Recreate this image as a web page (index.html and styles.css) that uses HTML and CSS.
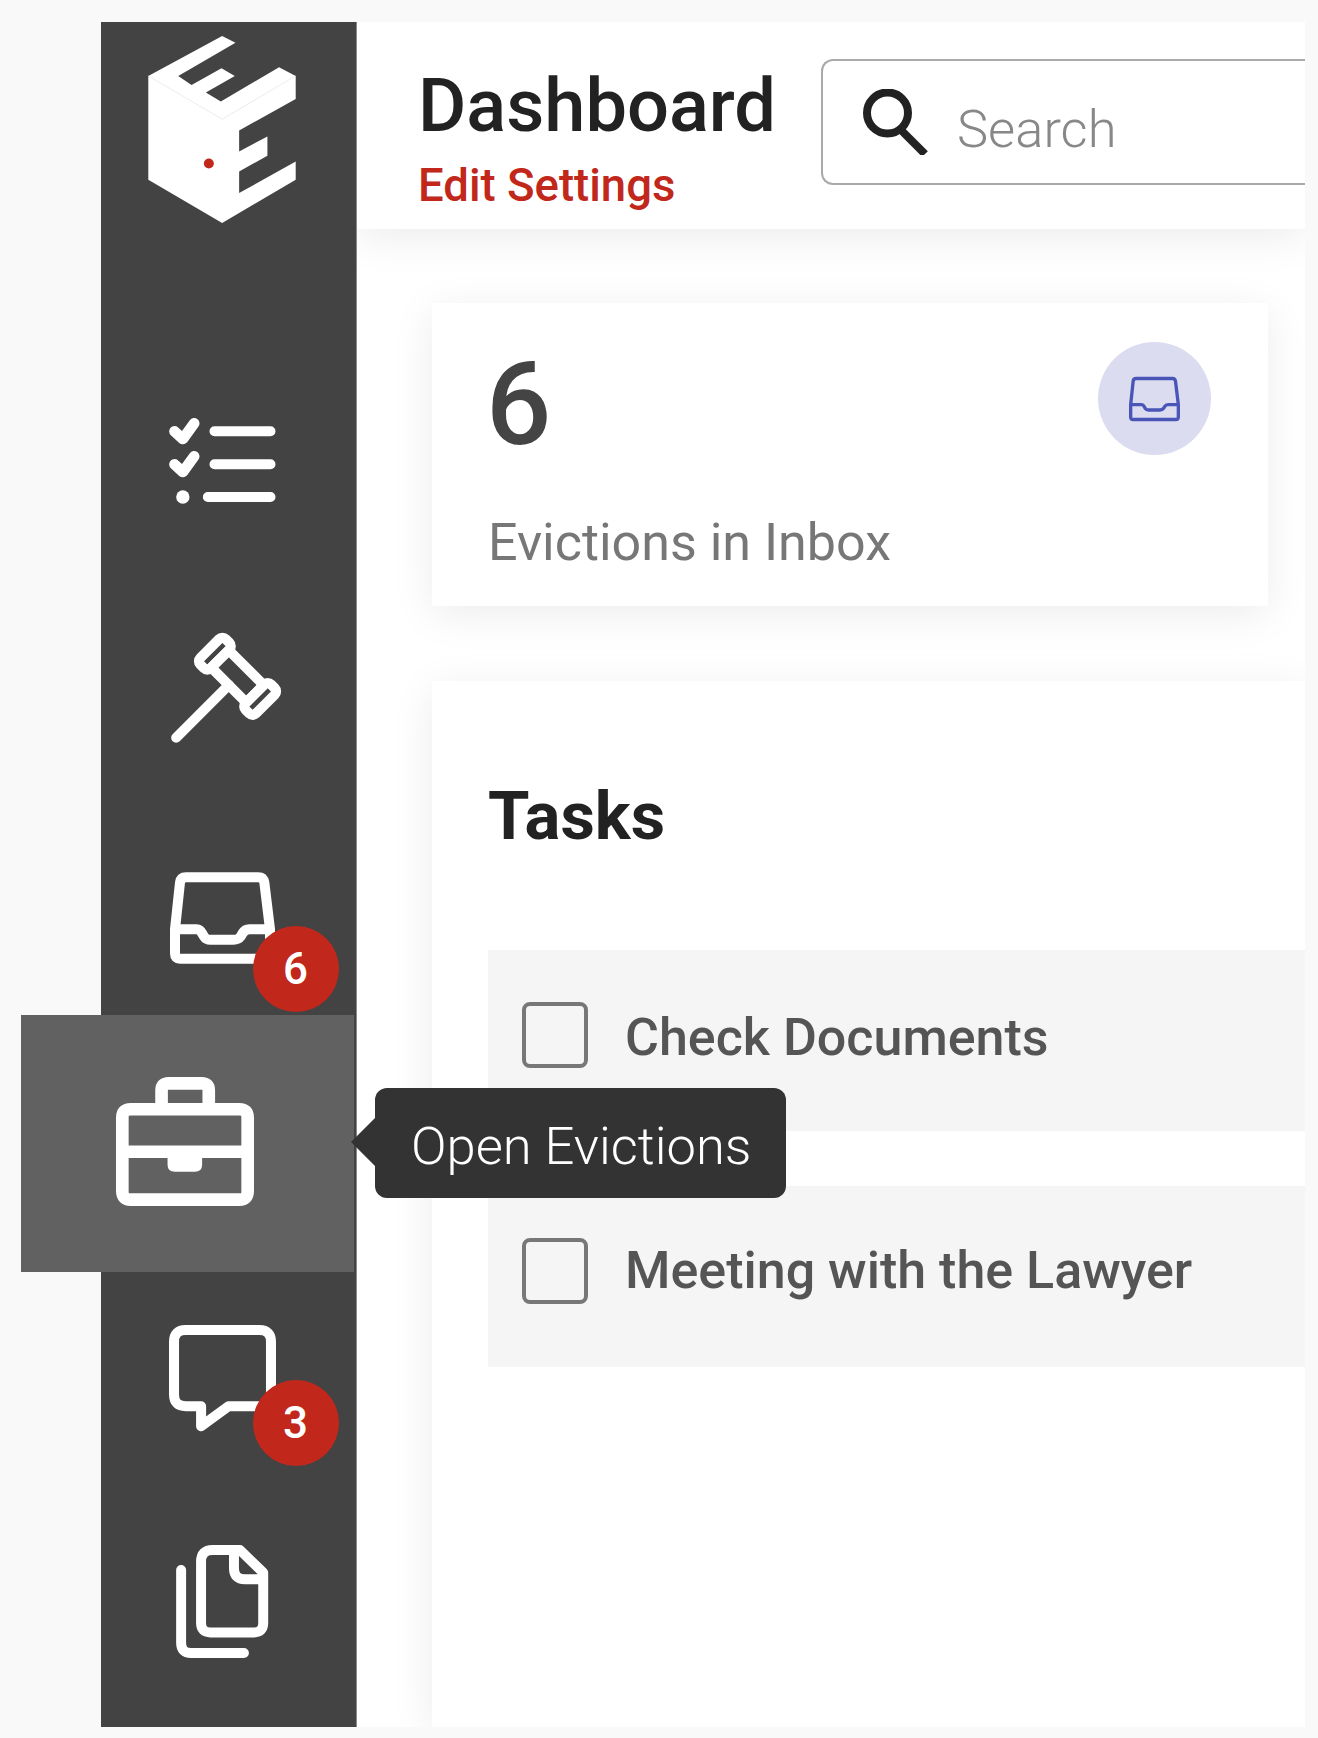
FILE: index.html
```html
<!DOCTYPE html>
<html lang="en">
<head>
  <meta charset="UTF-8" />
  <title>Dashboard</title>
  <link rel="stylesheet" href="styles.css">
</head>
<body>

  <aside class="sidebar">
    <svg class="logo" viewBox="445 108 443 562">
      <path fill="#fff" d="M445 228 667 108 707 128 535 228 575 255 665 205 705 228 618 278 663 305 838 202 888 228 888 297 718 392 718 455 803 410 803 468 718 515 718 580 888 485 888 540 667 670 445 540Z" />
      <path fill="none" stroke="#e2e2e2" stroke-width="2" d="M445 228 667 358 888 228" />
      <circle cx="627" cy="491" r="15" fill="#c1281b" />
    </svg>

    <nav class="nav">
      <a class="nav-item nav-tasks">
        <svg class="icon" width="107" height="86" viewBox="207 115 320 258">
          <path stroke-width="32" d="M223 155 248 178 282 131M223 254 248 277 282 230" />
          <path stroke-width="30" d="M343 155H511M343 254H511M323 352H511" />
          <circle cx="248" cy="352" r="20" fill="#fff" stroke="none" />
        </svg>
      </a>
      <a class="nav-item nav-gavel">
        <svg class="icon" width="111" height="111" viewBox="213 755 332 333">
          <path stroke-width="30" d="M228 1072 386 914" />
          <g stroke-width="30" transform="rotate(45 412 888)">
            <rect x="294" y="834" width="44" height="108" rx="14" />
            <rect x="486" y="834" width="44" height="108" rx="14" />
            <rect x="338" y="851" width="148" height="74" />
          </g>
        </svg>
      </a>
      <a class="nav-item nav-inbox">
        <svg class="icon" width="105" height="92" viewBox="510 97 315 275">
          <path stroke-width="30" d="M525 268 540 128Q542 112 558 112H775Q790 112 793 128L810 268V342Q810 357 795 357H540Q525 357 525 342ZM525 268H590Q600 268 606 280L612 290Q618 300 632 300H700Q715 300 722 290L728 280Q735 268 748 268H810" />
        </svg>
        <span class="badge">6</span>
      </a>
      <a class="nav-item nav-active">
        <svg class="icon" width="138" height="129" viewBox="347 710 415 388">
          <path stroke-width="38" d="M391 807H718Q743 807 743 832V1054Q743 1079 718 1079H391Q366 1079 366 1054V832Q366 807 391 807ZM366 935H743M484 807V750Q484 729 505 729H605Q626 729 626 750V807" />
          <path fill="#fff" stroke="none" d="M502 935H606V973Q606 995 584 995H524Q502 995 502 973Z" />
        </svg>
        <div class="tooltip">Open Evictions</div>
      </a>
      <a class="nav-item nav-chat">
        <svg class="icon" width="107" height="107" viewBox="207 135 320 320">
          <path stroke-width="30" d="M257 150H477Q512 150 512 185V343Q512 378 477 378H385L303 438V378H257Q222 378 222 343V185Q222 150 257 150Z" />
        </svg>
        <span class="badge">3</span>
      </a>
      <a class="nav-item nav-docs">
        <svg class="icon" width="93" height="113" viewBox="228 795 279 340">
          <path stroke-width="30" d="M338 810H420L490 878V1030Q490 1058 462 1058H331Q303 1058 303 1030V845Q303 810 338 810ZM402 815V865Q402 898 435 898H490M243 870V1090Q243 1120 273 1120H432" />
        </svg>
      </a>
    </nav>
  </aside>

  <main class="main">
    <header class="topbar">
      <div class="title-block">
        <h1>Dashboard</h1>
        <a class="settings-link">Edit Settings</a>
      </div>
      <div class="search">
        <svg class="search-icon" width="66" height="66" viewBox="0 0 66 66">
          <circle cx="24.5" cy="24" r="20.5" />
          <path d="M39 42 62 65" />
        </svg>
        <span class="search-text">Search</span>
      </div>
    </header>

    <section class="stat-card">
      <div class="stat-top">
        <div class="stat-number">6</div>
        <div class="stat-circle">
          <svg class="icon-blue" width="53" height="46" viewBox="510 97 315 275">
            <path d="M525 268 540 128Q542 112 558 112H775Q790 112 793 128L810 268V342Q810 357 795 357H540Q525 357 525 342ZM525 268H590Q600 268 606 280L612 290Q618 300 632 300H700Q715 300 722 290L728 280Q735 268 748 268H810" />
          </svg>
        </div>
      </div>
      <div class="stat-label">Evictions in Inbox</div>
    </section>

    <section class="tasks-card">
      <h2>Tasks</h2>
      <div class="task-row">
        <span class="checkbox"></span>
        <span class="task-text">Check Documents</span>
      </div>
      <div class="task-row">
        <span class="checkbox"></span>
        <span class="task-text">Meeting with the Lawyer</span>
      </div>
    </section>
  </main>

</body>
</html>
```

FILE: styles.css
```css
* {
  box-sizing: border-box;
}

body {
  margin: 0;
  height: 1738px;
  padding: 22px 13px 11px 101px;
  display: flex;
  overflow: hidden;
  background-color: #f9f9f9;
  font-family: Roboto, "Liberation Sans", sans-serif;
}

h1, h2 {
  margin: 0;
}

/* sidebar */
.sidebar {
  position: relative;
  z-index: 2;
  width: 256px;
  flex-shrink: 0;
  padding-top: 14px;
  background-color: #434343;
  border-right: 1px solid #8a8a8a;
}

.logo {
  display: block;
  width: 148px;
  height: 187px;
  margin-left: 47px;
}

.nav {
  display: flex;
  flex-direction: column;
  align-items: center;
  padding-right: 13px;
}

.nav-item {
  position: relative;
  display: flex;
  justify-content: center;
  align-items: center;
}

.nav-tasks { margin-top: 195px; }
.nav-gavel { margin-top: 128px; margin-left: 9px; }
.nav-inbox { margin-top: 129px; }
.nav-chat { margin-top: 53px; }
.nav-docs { margin-top: 113px; }

.nav-active {
  align-self: flex-start;
  width: 333px;
  height: 257px;
  margin-top: 51px;
  margin-left: -80px;
  padding: 0 5px 4px 0;
  background-color: #616161;
}

.icon {
  display: block;
  fill: none;
  stroke: #fff;
  stroke-linecap: round;
  stroke-linejoin: round;
}

.badge {
  position: absolute;
  left: 83px;
  bottom: -48px;
  width: 86px;
  height: 86px;
  border-radius: 50%;
  background-color: #c1281b;
  color: #fff;
  font-size: 44px;
  font-weight: 500;
  line-height: 86px;
  text-align: center;
}

.nav-chat .badge {
  left: 84px;
  bottom: -34px;
}

.tooltip {
  position: absolute;
  left: 354px;
  top: 73px;
  width: 411px;
  height: 110px;
  padding-left: 36px;
  border-radius: 12px;
  background-color: #333;
  color: #fff;
  font-size: 52.5px;
  font-weight: 300;
  line-height: 117px;
  white-space: nowrap;
}

.tooltip::before {
  content: "";
  position: absolute;
  left: -24px;
  top: 29px;
  border-top: 25px solid transparent;
  border-bottom: 25px solid transparent;
  border-right: 25px solid #333;
}

/* main column */
.main {
  flex: 1;
  display: flex;
  flex-direction: column;
  overflow: hidden;
  background-color: #fff;
}

.topbar {
  height: 207px;
  flex-shrink: 0;
  display: flex;
  align-items: flex-start;
  padding: 37px 0 0 61px;
  background-color: #fff;
  box-shadow: 0 8px 40px rgba(0,0,0,0.08);
  position: relative;
}

.title-block {
  width: 403px;
  flex-shrink: 0;
  padding-top: 5px;
}

h1 {
  color: #222;
  font-size: 74px;
  font-weight: 500;
  line-height: 84px;
}

.settings-link {
  display: block;
  margin-top: 12px;
  color: #c1281b;
  font-size: 45.5px;
  font-weight: 500;
  line-height: 52px;
}

.search {
  flex: 1;
  height: 126px;
  display: flex;
  align-items: center;
  padding-left: 40px;
  border: 2px solid #aaa;
  border-right: none;
  border-radius: 12px 0 0 12px;
}

.search-icon {
  fill: none;
  stroke: #222;
  stroke-width: 8;
}

.search-text {
  margin-left: 28px;
  padding-top: 13px;
  color: #888;
  font-size: 52.5px;
  font-weight: 300;
}

.stat-card {
  width: 836px;
  height: 303px;
  flex-shrink: 0;
  margin: 74px 0 0 75px;
  padding: 39px 57px 0 57px;
  background-color: #fff;
  box-shadow: 0 8px 40px rgba(0,0,0,0.08);
}

.stat-top {
  display: flex;
  justify-content: space-between;
}

.stat-number {
  color: #444;
  font-size: 115px;
  font-weight: 500;
  line-height: 126px;
  margin-left: -3px;
}

.stat-circle {
  width: 113px;
  height: 113px;
  display: flex;
  justify-content: center;
  align-items: center;
  border-radius: 50%;
  background-color: #dcdcf0;
}

.icon-blue {
  fill: none;
  stroke: #4a55b8;
  stroke-width: 20;
}

.stat-label {
  margin-top: 45px;
  margin-left: -1px;
  color: #777;
  font-size: 52px;
  line-height: 60px;
}

.tasks-card {
  flex: 1;
  margin: 75px 0 0 75px;
  padding-left: 56px;
  background-color: #fff;
  box-shadow: 0 8px 40px rgba(0,0,0,0.08);
}

h2 {
  margin-top: 95px;
  margin-bottom: 94px;
  color: #222;
  font-size: 67px;
  font-weight: 700;
  line-height: 80px;
}

.task-row {
  height: 181px;
  display: flex;
  align-items: center;
  gap: 37px;
  margin-bottom: 55px;
  padding: 0 0 6px 34px;
  background-color: #f5f5f5;
}

.task-row:last-child .task-text {
  margin-bottom: 6px;
}

.checkbox {
  width: 66px;
  height: 66px;
  margin-top: -6px;
  border: 4px solid #777;
  border-radius: 8px;
}

.task-text {
  color: #555;
  font-size: 52px;
  font-weight: 500;
}
```
